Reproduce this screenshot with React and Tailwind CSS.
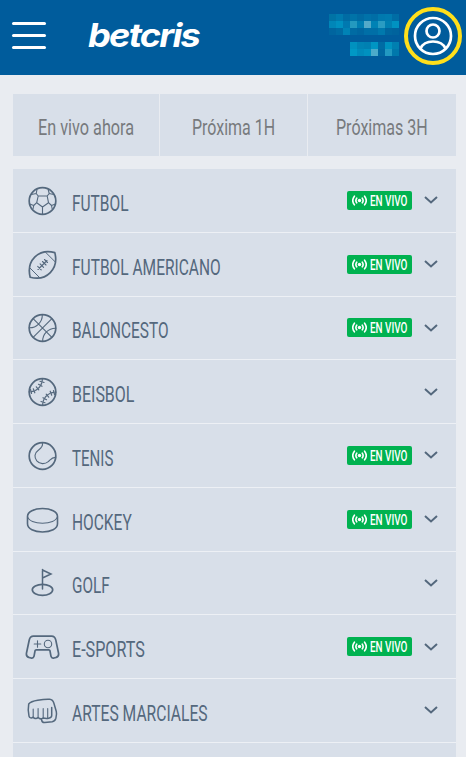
import { useLayoutEffect, useRef } from "react";

const SPORTS = [
    { id: "futbol", name: "FUTBOL", width: 56.5, live: true },
    { id: "americano", name: "FUTBOL AMERICANO", width: 149, live: true },
    { id: "baloncesto", name: "BALONCESTO", width: 96.5, live: true },
    { id: "beisbol", name: "BEISBOL", width: 62.5, live: false },
    { id: "tenis", name: "TENIS", width: 41.5, live: true },
    { id: "hockey", name: "HOCKEY", width: 60, live: true },
    { id: "golf", name: "GOLF", width: 37.5, live: false },
    { id: "esports", name: "E-SPORTS", width: 73, live: true },
    { id: "artes", name: "ARTES MARCIALES", width: 135.5, live: false },
];

const BLUR_TOP = [
    "#0073a5", "#007aae", "#006ca4", "#0073a8", "#006ba3", "#0072a9", "#006ea6", "#0079ae", "#007bb0", "#006da5",
    "#0086b8", "#0090c0", "#0079b0", "#2499bf", "#007eb2", "#54aac9", "#0082b5", "#2a9cc2", "#0080b2", "#0092c1",
    "#00659f", "#006ba3", "#0083b6", "#006ba3", "#0066a0", "#006fa7", "#006fa7", "#0079ad", "#00669f", "#00639d",
];

const BLUR_BOTTOM = [
    "#0091bf", "#0083b4", "#0080b2", "#0095c3", "#006ca4", "#0092bf", "#007fb1",
    "#0098c5", "#008abb", "#0091c0", "#4cabca", "#0068a1", "#2299c1", "#0078ac",
];

/**
 * Condenses a line of text to a given width.
 *
 * @param {Object} props
 * @param {Number} props.width
 * @param {String} props.className
 * @param {React.ReactNode} props.children
 */
const CondensedText = ({ width, className, children }) => {
    const ref = useRef(null);

    useLayoutEffect(() => {
        const el = ref.current;
        el.style.transform = `scaleX(${width / el.offsetWidth})`;
    }, [width, children]);

    return <span className={`block shrink-0 ${className}`} style={{ width }}>
        <span ref={ref} className="inline-block origin-left whitespace-nowrap">{children}</span>
    </span>
}

const SportIcon = ({ id }) => (
    <svg viewBox="0 0 36 36" className="mt-px h-9 w-9 shrink-0" fill="none" stroke="#54687d" strokeWidth="1.7" strokeLinecap="round" strokeLinejoin="round">
        {id === "futbol" && <>
            <circle cx="17.5" cy="18" r="13.3" />
            <g strokeWidth="1.1">
                <path d="M13.200 13h9l1.300 6.700-6 4.300-5.800-4.300zM13.200 13l-2-2.500.8-4M22.200 13l2-2.500-1-4M11.200 10.500 6.500 11.500M24.200 10.500l4.500 1M11.700 19.700l-3 2.800-4-1.500M23.500 19.700l3 2.800 4-1.500M17.500 24v6.800M8.700 22.500l-.7 3.500M26.500 22.500l.7 3.500" />
            </g>
        </>}
        {id === "americano" && <>
            <path d="M29.800 5.600C22.500 3.600 14.800 5 9.700 10.200S3.300 22.800 5.200 30.200C12.500 32.200 20.200 30.800 25.300 25.600S31.700 13 29.800 5.600Z" />
            <g strokeWidth="1"><path d="M20.800 5.500 30 14.700M5 21 14.500 30.500" /></g>
            <path strokeWidth="1.100" d="m13 22.500 9-9M12.700 19.300l3.500 3.500M15.100 16.900l3.500 3.500M17.500 14.500l3.500 3.500M19.500 12.500l3 3" />
        </>}
        {id === "baloncesto" && <>
            <circle cx="17.500" cy="18" r="13.300" />
            <path strokeWidth="1.100" d="M8.100 8.600l18.800 18.800M26.900 8.600 8.100 27.400M17.300 4.700C17.500 12 11.500 18 4.200 17.800M17.700 31.300C17.500 24 23.500 18 30.800 18.200" />
        </>}
        {id === "beisbol" && <>
            <circle cx="17.500" cy="18" r="13.300" />
            <g strokeWidth="1.200">
                <path d="M17.300 4.700C17.500 12 11.500 18 4.200 17.800M17.700 31.300C17.500 24 23.500 18 30.800 18.200" strokeDasharray="2.500 1.500" />
                <path d="M15 7.200l4 1.300M13.500 10.300l3.500 2M11.300 12.800l2.500 3M8.300 14.800l1.500 4M5.500 15.500l1 4M20 28.800l-4-1.300M21.500 25.700l-3.500-2M23.700 23.200l-2.500-3M26.700 21.200l-1.500-4M29.500 20.500l-1-4" />
            </g>
        </>}
        {id === "tenis" && <>
            <circle cx="17.500" cy="18" r="13.300" />
            <path strokeWidth="1.100" d="M17.300 4.700c1.200 4-1.500 5.700-4 7.500-4.200 2.900-4.100 7.400-1.500 10.700 2.900 3.500 8.200 3.500 11.500.7 2.500-2.200 3.500-4.500 7.400-4.200" />
        </>}
        {id === "hockey" && <>
            <path strokeWidth="1.600" d="M2.500 14.500C2.500 9.700 9.200 6.500 17.500 6.500s15 3.200 15 8v7.300c0 5-6.700 8.200-15 8.200s-15-3.200-15-8.200Z" />
            <path strokeWidth="1.100" d="M2.500 14.500c1 4.300 7.400 6.700 15 6.700s14-2.400 15-6.700" />
        </>}
        {id === "golf" && <>
            <path d="M17.500 24V4.500M17.500 5l8.500 4-8.500 4" strokeWidth="1.500" strokeLinejoin="miter" />
            <ellipse cx="17.500" cy="24.800" rx="10.200" ry="5.500" />
        </>}
        {id === "esports" && <>
            <path d="M8.500 7.200h18c3 0 3.800 1.500 4.300 4l2.600 12.300c.7 3-.2 4.300-2.200 4.900l-2.200.6c-1.500.4-2.600-.2-3-1.700l-1-5.300c-.1-.8-.5-1.100-1.300-1.100H11.300c-.8 0-1.200.3-1.300 1.100l-1 5.300c-.4 1.500-1.500 2.100-3 1.700l-2.200-.6c-2-.6-2.900-1.900-2.200-4.900L4.200 11.200c.5-2.500 1.300-4 4.300-4Z" />
            <circle cx="23" cy="15" r="3.700" strokeWidth="1.100" />
            <path strokeWidth="1.100" d="M12.500 11.700v6.600M9.200 15h6.600" />
        </>}
        {id === "artes" && <>
            <path strokeWidth="1.500" d="M3.700 11c2-2.500 5.300-3.100 9-3.700 4.500-.8 8.300-1.200 12-1 2.500.2 3.500 1.500 4.200 4L31.300 18.500c.7 2.500.1 4.500-.5 7-.6 2-1.800 2.900-3.600 3.200l-7.500.9c-2 .1-3-1-3.200-3.200M3.700 11c-.7 4-.5 8.700.3 12.200.4 1.900 2.500 2.200 4.200 1 1.300 1.700 3.500 1.700 4.900.3 1.500 1.600 3.500 1.600 4.900.5 3.500.7 8.700.7 8.700-2.500v-8" />
            <path strokeWidth="1.100" d="M8.200 16v8.200M13.100 15.500v9M18.200 15.500v9.200M22.700 15.500v9.500" />
        </>}
    </svg>
)

const LiveBadge = () => (
    <div className="flex h-[19px] w-[65px] items-center rounded-[2px] bg-[#00b250] pl-[5px] text-white">
        <svg viewBox="0 0 15 11" className="mr-[3px] h-[11px] w-[15px] shrink-0" fill="none" stroke="currentColor" strokeWidth="1.600" strokeLinecap="round">
            <circle cx="7.500" cy="5.500" r="1.700" fill="currentColor" stroke="none" />
            <path d="M4.700 3.200c-1 1.400-1 3.200 0 4.600M10.300 3.200c1 1.400 1 3.200 0 4.600M2.400 1.200c-2 2.600-2 6 0 8.600M12.600 1.200c2 2.600 2 6 0 8.600" />
        </svg>
        <CondensedText width={37.5} className="mt-0.5 text-[14px] leading-[19px] font-medium">EN VIVO</CondensedText>
    </div>
)

const SportRow = ({ sport }) => (
    <li className="flex h-[63.750px] shrink-0 items-center border-b border-[#edf0f5] pr-[18px] pl-3">
        <SportIcon id={sport.id} />
        <CondensedText width={sport.width} className="mt-[5px] ml-[11px] text-[22.500px] leading-7 text-[#54687d]">{sport.name}</CondensedText>
        <div className="ml-auto flex items-center gap-3">
            {sport.live && <LiveBadge />}
            <svg viewBox="0 0 14 8" className="h-2 w-3.5" fill="none" stroke="#54687d" strokeWidth="2">
                <path d="M1 1l6 5.500L13 1" />
            </svg>
        </div>
    </li>
)

const Header = () => (
    <header className="flex h-[75px] items-start bg-[#005c9c] pl-3">
        <button className="mt-[22px] flex w-[34px] flex-col gap-[9px]" aria-label="Menu">
            <span className="h-[3px] rounded-full bg-white" />
            <span className="h-[3px] rounded-full bg-white" />
            <span className="h-[3px] rounded-full bg-white" />
        </button>
        <CondensedText width={111} className="mt-[17px] ml-[42px] font-[Inter,sans-serif] text-[33px] leading-9 font-bold tracking-tighter text-white italic">betcris</CondensedText>
        <div className="mt-3.5 ml-auto flex w-[70px] flex-col items-end gap-[7px]">
            <div className="grid grid-cols-10">
                {BLUR_TOP.map((color, i) => <span key={i} className="h-[7px] w-[7px]" style={{ background: color }} />)}
            </div>
            <div className="grid grid-cols-7">
                {BLUR_BOTTOM.map((color, i) => <span key={i} className="h-[7px] w-[7px]" style={{ background: color }} />)}
            </div>
        </div>
        <svg viewBox="0 0 58 58" className="mt-[7px] mr-1 ml-[5px] h-[58px] w-[58px]" fill="none" stroke="white" strokeWidth="2.700">
            <circle cx="29" cy="29" r="27" stroke="#ffdf1b" strokeWidth="4" />
            <circle cx="29" cy="29" r="18" />
            <circle cx="29" cy="24" r="6.500" />
            <path d="M16.500 41.500C18.500 37 23 34.500 29 34.500s10.500 2.500 12.500 7" />
        </svg>
    </header>
)

const App = () => {
    return <div className="h-[757px] w-[466px] overflow-hidden bg-[#e9ecf1] font-[Roboto,sans-serif]">
        <Header />
        <nav className="mt-[19px] mr-2.5 ml-[13px] flex h-[62px] gap-px text-[22.500px] leading-7 text-[#777a7d]">
            <button className="flex w-[146px] items-center justify-center bg-[#d8dfe9]">
                <CondensedText width={96} className="mt-[3px] text-left">En vivo ahora</CondensedText>
            </button>
            <button className="flex w-[147px] items-center justify-center bg-[#d8dfe9]">
                <CondensedText width={83} className="mt-[3px] text-left">Próxima 1H</CondensedText>
            </button>
            <button className="flex w-[148px] items-center justify-center bg-[#d8dfe9]">
                <CondensedText width={92} className="mt-[3px] text-left">Próximas 3H</CondensedText>
            </button>
        </nav>
        <ul className="mt-[13px] mr-2.5 ml-[13px] flex h-[600px] flex-col bg-[#d8dfe9]">
            {SPORTS.map((sport) => <SportRow key={sport.id} sport={sport} />)}
        </ul>
    </div>
}

export default App;
